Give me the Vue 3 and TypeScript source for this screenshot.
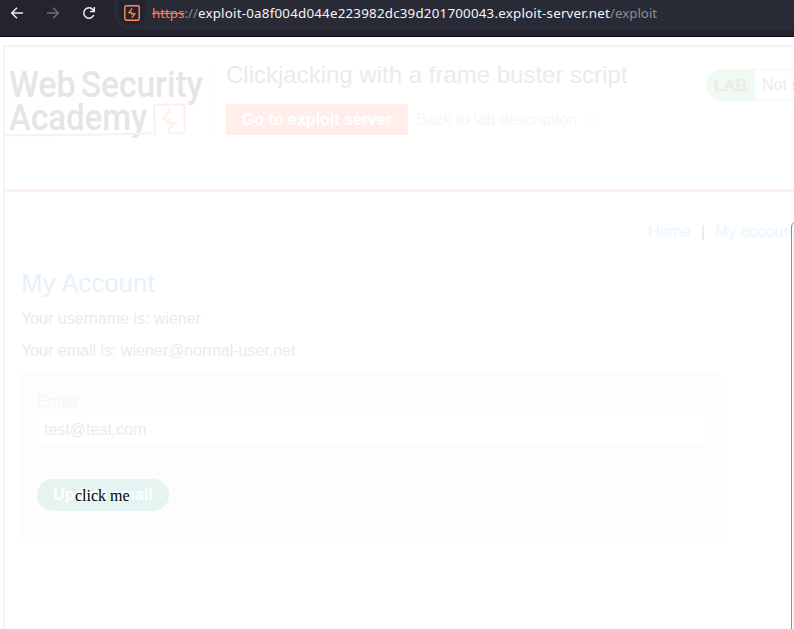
<script setup lang="ts">
import { ref } from 'vue'

const host = 'exploit-0a8f004d044e223982dc39d201700043.exploit-server.net'
const email = ref('test@test.com')
</script>

<template>
  <div class="window">
    <header class="toolbar">
      <nav class="controls">
        <svg class="icon" viewBox="0 0 16 16"><path d="M14 8H3M8 2.7 2.7 8 8 13.3" /></svg>
        <svg class="icon muted" viewBox="0 0 16 16"><path d="M2 8h11M8 2.7 13.3 8 8 13.3" /></svg>
        <svg class="icon" viewBox="0 0 16 16"><path d="M12.8 10A5.2 5.2 0 1 1 12 4.7L13.2 6M13.3 2v4.4H9" /></svg>
      </nav>
      <div class="address">
        <span class="site">
          <svg viewBox="0 0 16 16">
            <rect x=".8" y=".8" width="14.4" height="14.4" rx="1.5" />
            <path class="spark" d="M8 3.4 5 7.6h2.6v1.2h3.2L7.8 12.6" />
          </svg>
        </span>
        <span class="url"><span class="scheme">https</span>://<b>{{ host }}</b>/exploit</span>
      </div>
    </header>

    <main class="page">
      <div class="frame">
        <section class="lab">
          <svg class="logo" viewBox="0 0 204 74">
            <text x="4" y="33" textLength="67" lengthAdjust="spacingAndGlyphs">Web</text>
            <text x="76" y="33" textLength="123" lengthAdjust="spacingAndGlyphs">Security</text>
            <text x="4" y="66" textLength="139" lengthAdjust="spacingAndGlyphs">Academy</text>
            <path class="line" d="M0 71.5 44 71.5l65-1 41.5-1-.7-28.7 30.4-.3.3 28.3-14.8.2" />
            <path class="line" d="m166 45-7.3 10 7 1-3 3.3 9-.3-7.4 6.3 1.4 4 6-.6" />
          </svg>
          <div class="intro">
            <h2>Clickjacking with a frame buster script</h2>
            <div class="links">
              <a class="exploit">Go to exploit server</a>
              <a class="back">Back to lab description
                <svg viewBox="0 0 12 12"><path d="m1 1 5 5-5 5M6 1l5 5-5 5" /></svg>
              </a>
            </div>
          </div>
          <div class="status"><strong>LAB</strong><span>Not solved</span></div>
        </section>

        <section class="account">
          <nav class="menu"><a>Home</a><i>|</i><a>My account</a></nav>
          <h1>My Account</h1>
          <p>Your username is: wiener</p>
          <p>Your email is: wiener@normal-user.net</p>
          <form @submit.prevent>
            <label for="email">Email</label>
            <input id="email" v-model="email" type="text">
            <div class="submit">
              <button type="submit">Update email</button>
              <span class="decoy">click me</span>
            </div>
          </form>
        </section>
      </div>
      <aside class="panel"></aside>
    </main>
  </div>
</template>

<style>
body { margin: 0; overflow: hidden; }
</style>

<style scoped>
* { box-sizing: border-box; }
.window { width: 794px; height: 629px; overflow: hidden; background: #fff; }
.toolbar { display: flex; height: 37px; background: #23242e; border-bottom: 1px solid #07080d; }
.controls { display: flex; gap: 20px; width: 115px; padding: 5px 0 0 9px; }
.icon { width: 16px; height: 16px; fill: none; stroke: #eeeef0; stroke-width: 1.5; flex: none; }
.muted { stroke: #6d6e76; }
.address { display: flex; flex: 1; height: 30px; background: #282a36; border-radius: 0 0 0 15px; }
.site { display: flex; width: 28px; height: 25px; margin-left: 3px; padding: 5px 0 0 6px; background: #23242e; border-radius: 0 0 12px 12px; }
.site svg { width: 16px; height: 16px; fill: none; stroke: #ff8a5c; stroke-width: 1.4; }
.site .spark { stroke-width: 1.3; }
.url { margin-left: 6px; font: 13.33px/18px "Noto Sans", sans-serif; padding-top: 4px; color: #8d8e96; white-space: nowrap; }
.url b { font-weight: 400; letter-spacing: .22px; color: #f5f5f7; }
.scheme { color: #f58155; text-decoration: line-through; }

.page { position: relative; height: 592px; padding: 8px 0 0 3px; }
.frame { width: 900px; height: 700px; border: 2px solid #f4f4f4; font: 16px/20px "Liberation Sans", Arial, sans-serif; color: #ebebeb; }
.lab { display: flex; height: 145px; border-bottom: 3px solid #ffeeea; }
.logo { width: 204px; height: 74px; margin-top: 17px; border-right: 1px solid #fdfdfd; flex: none; overflow: visible; }
.logo text { font: 500 38px Roboto, sans-serif; fill: #e5e5e5; }
.line { fill: none; stroke: #ffeee9; stroke-width: 2; }
.intro { width: 480px; margin-left: 17px; padding-top: 13px; flex: none; }
h2 { margin: 0; font-size: 24px; line-height: 30px; font-weight: 400; }
.links { display: flex; margin-top: 14px; }
.exploit { width: 182px; height: 31px; background: #ffeeea; color: #fff; font-weight: 700; text-align: center; line-height: 31px; }
.back { margin-left: 8px; line-height: 31px; color: #f6f6f6; }
.back svg { width: 12px; height: 12px; margin-left: 4px; fill: none; stroke: #f4f4f4; stroke-width: 1; vertical-align: -1px; }
.status { display: flex; height: 32px; margin-top: 22px; border: 1px solid #effaf1; border-radius: 16px; line-height: 30px; overflow: hidden; width: 160px; flex: none; }
.status strong { width: 48px; padding-left: 7px; background: #effaf1; line-height: 32px; }
.status span { padding-left: 7px; }

.account { padding: 30px 16px 0; }
.menu { display: flex; margin-left: 627px; color: #e9f7ff; white-space: nowrap; }
.menu i { margin: 0 10px; font-style: normal; color: #e5e5e5; }
h1 { margin: 26px 0 0; font-size: 25.8px; line-height: 30px; font-weight: 400; color: #e5f2fb; }
p { margin: 11px 0 0; line-height: 20px; }
p + p { margin-top: 12px; }
form { width: 700px; height: 171px; margin-top: 11px; padding: 20px 16px 0; background: #fdfdfd; }
label { display: block; color: #f6f6f6; }
input { display: block; width: 668px; height: 31px; margin-top: 3px; padding: 0 6px 2px; border: 1px solid #fcfcfc; background: #fff; font: inherit; color: #ebebeb; }
.submit { position: relative; width: 132px; margin-top: 33px; }
button { display: block; width: 132px; height: 32px; padding: 0; border: 0; border-radius: 16px; background: #e5f4f1; color: #fff; font: 700 16px/32px "Liberation Sans", Arial, sans-serif; }
.decoy { position: absolute; left: 38px; top: 8px; font: 16px/18px "Liberation Serif", "Times New Roman", serif; color: #000; white-space: nowrap; }
.panel { position: absolute; left: 791px; top: 184px; width: 30px; height: 500px; border: 1px solid #8f8f8f; border-radius: 6px 0 0; background: #f7f7f7; }
</style>
